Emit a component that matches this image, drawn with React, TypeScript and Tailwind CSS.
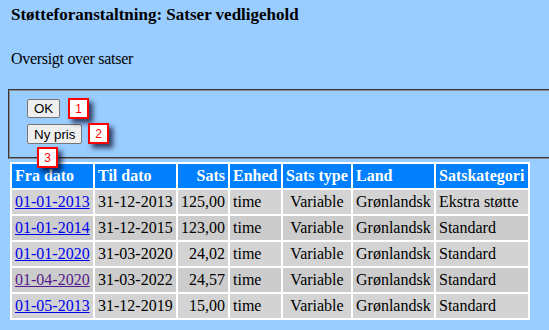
import React from "react";

const rows = [
  { fra: "01-01-2013", til: "31-12-2013", sats: "125,00", kat: "Ekstra støtte", visited: false },
  { fra: "01-01-2014", til: "31-12-2015", sats: "123,00", kat: "Standard", visited: false },
  { fra: "01-01-2020", til: "31-03-2020", sats: "24,02", kat: "Standard", visited: false },
  { fra: "01-04-2020", til: "31-03-2022", sats: "24,57", kat: "Standard", visited: true },
  { fra: "01-05-2013", til: "31-12-2019", sats: "15,00", kat: "Standard", visited: false },
];

function Badge({ n, cls }: { n: string; cls: string }) {
  return (
    <div
      className={`absolute w-[21px] h-[21px] bg-white border-2 border-[#ff0000] flex items-center justify-center text-[12px] leading-none text-[#ff0000] shadow-[4px_4px_5px_rgba(0,0,30,0.7)] ${cls}`}
      style={{ fontFamily: '"Liberation Sans", Arial, sans-serif' }}
    >
      {n}
    </div>
  );
}

export default function App() {
  const btn =
    "block bg-[#efefef] border border-[#767676] rounded-[2px] px-[6px] text-[13.33px] leading-[15px] text-black";
  return (
    <div
      className="relative w-[549px] h-[330px] overflow-hidden bg-[#99ccff] text-black text-[16px]"
      style={{ fontFamily: '"Liberation Serif", "Times New Roman", serif' }}
    >
      <div className="pl-[8px]">
        <h3 className="ml-[3px] pt-[6px] font-bold text-[17px] leading-[18px]">
          Støtteforanstaltning: Satser vedligehold
        </h3>
        <p className="ml-[3px] mt-[26px] leading-[18px] tracking-[-0.3px]">Oversigt over satser</p>
        <div className="mt-[21px] w-[600px] h-[70px] border-2 [border-style:groove] border-[#8c8c8c] pl-[17px] pt-[8px]">
          <div className="flex flex-col items-start gap-[6px]" style={{ fontFamily: '"Liberation Sans", Arial, sans-serif' }}>
            <button className={`${btn} h-[19px]`}>OK</button>
            <button className={`${btn} h-[20px]`}>Ny pris</button>
          </div>
        </div>
        <table className="ml-[2px] mt-[3px] bg-white border-separate border-spacing-[2px] table-fixed w-[520px] leading-[18px]">
          <colgroup>
            <col className="w-[81px]" />
            <col className="w-[81px]" />
            <col className="w-[50px]" />
            <col className="w-[51px]" />
            <col className="w-[68px]" />
            <col className="w-[81px]" />
            <col className="w-[92px]" />
          </colgroup>
          <thead>
            <tr className="bg-[#0080ff] text-white font-bold h-[24px]">
              <th className="px-[3px] text-left whitespace-nowrap">Fra dato</th>
              <th className="px-[3px] text-left whitespace-nowrap">Til dato</th>
              <th className="px-[3px] text-right whitespace-nowrap">Sats</th>
              <th className="px-[3px] text-left whitespace-nowrap">Enhed</th>
              <th className="px-[3px] text-left whitespace-nowrap">Sats type</th>
              <th className="px-[3px] text-left whitespace-nowrap">Land</th>
              <th className="px-[3px] text-left whitespace-nowrap">Satskategori</th>
            </tr>
          </thead>
          <tbody>
            {rows.map((r, i) => (
              <tr key={i} className={`h-[24px] ${i % 2 === 0 ? "bg-[#d3d3d3]" : "bg-[#cccccc]"}`}>
                <td className="px-[3px] whitespace-nowrap">
                  <a className={`underline ${r.visited ? "text-[#551a8b]" : "text-[#0000ee]"}`} href="#">
                    {r.fra}
                  </a>
                </td>
                <td className="px-[3px] whitespace-nowrap">{r.til}</td>
                <td className="px-[3px] text-right whitespace-nowrap">{r.sats}</td>
                <td className="px-[3px] whitespace-nowrap">time</td>
                <td className="px-[3px] text-center whitespace-nowrap">Variable</td>
                <td className="px-[3px] whitespace-nowrap">Grønlandsk</td>
                <td className="px-[3px] whitespace-nowrap">{r.kat}</td>
              </tr>
            ))}
          </tbody>
        </table>
      </div>
      <Badge n="1" cls="left-[68px] top-[98px]" />
      <Badge n="2" cls="left-[88px] top-[123px]" />
      <Badge n="3" cls="left-[37px] top-[147px]" />
    </div>
  );
}
